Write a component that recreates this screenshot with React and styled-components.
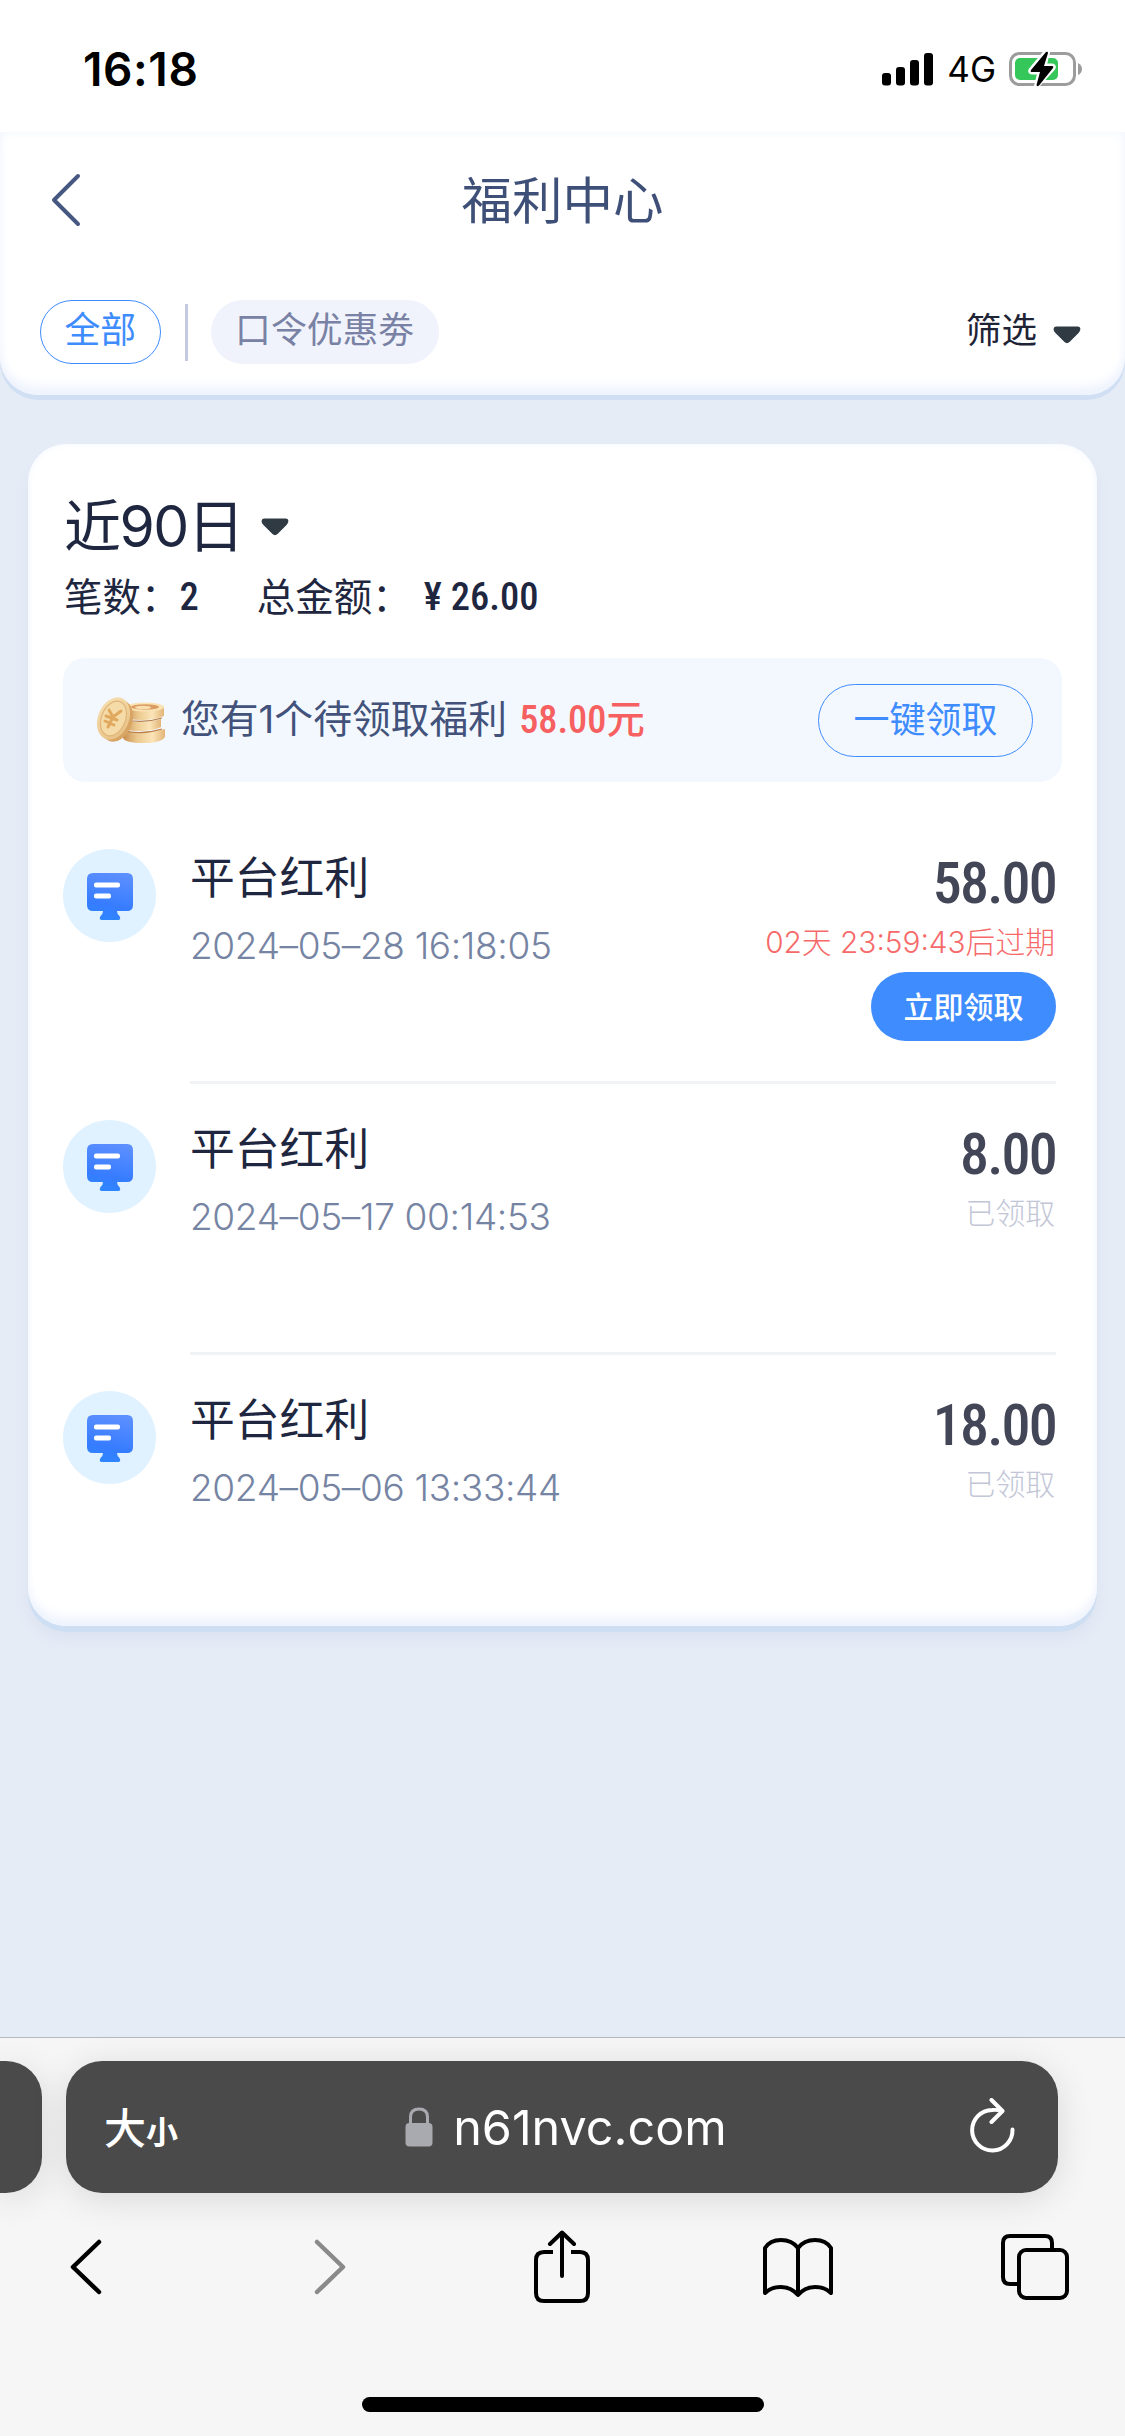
import React, { useState } from "react";
import styled, { createGlobalStyle } from "styled-components";

const GlobalStyle = createGlobalStyle`
  * {
    box-sizing: border-box;
  }

  body {
    margin: 0;
    background-color: #e5ecf6;
    font-family: Inter, "Noto Sans CJK SC", sans-serif;
  }

  button {
    font-family: inherit;
    cursor: pointer;
  }
`;

const Phone = styled.div`
  display: flex;
  flex-direction: column;
  width: 1125px;
  height: 2436px;
  overflow: hidden;
  background-color: #e5ecf6;
`;

const StatusBar = styled.div`
  display: flex;
  justify-content: space-between;
  align-items: center;
  height: 132px;
  padding: 6px 42px 0 83px;
  background-color: white;
  color: black;
`;

const Clock = styled.div`
  font-size: 46px;
  font-weight: 600;
  letter-spacing: 0.6px;
`;

const StatusIcons = styled.div`
  display: flex;
  align-items: center;
  gap: 13px;
  font-size: 35px;
`;

const Header = styled.header`
  height: 263px;
  background-color: white;
  border-radius: 0 0 38px 38px;
  box-shadow: 0 5px 0 #d0dff3, inset 0 -12px 12px -4px #edf2fd,
    inset 0 0 12px #f3f6fd;
`;

const TitleBar = styled.div`
  display: grid;
  grid-template-columns: 60px 1fr 60px;
  align-items: center;
  height: 136px;
  padding: 0 36px;
`;

const BackButton = styled.button`
  display: flex;
  padding: 0 0 0 14px;
  border: none;
  background-color: transparent;
`;

const Title = styled.h1`
  margin: 0;
  padding-bottom: 6px;
  color: #3f5078;
  font-size: 50.5px;
  font-weight: 400;
  text-align: center;
`;

const FilterBar = styled.div`
  display: flex;
  align-items: center;
  padding: 32px 44px 0 40px;
`;

const Pill = styled.button`
  height: 64px;
  padding: 0 23.5px 3px;
  border: 1.5px solid ${({ $active }) => ($active ? "#3f8cff" : "#f0f3fb")};
  border-radius: 32px;
  background-color: ${({ $active }) => ($active ? "white" : "#f0f3fb")};
  color: ${({ $active }) => ($active ? "#3f8cff" : "#7981a4")};
  font-size: 35.8px;
  line-height: 55px;
`;

const PillDivider = styled.div`
  width: 3px;
  height: 57px;
  margin: 0 23px 0 24px;
  background-color: #c5cade;
`;

const FilterLink = styled.div`
  display: flex;
  align-items: center;
  gap: 16px;
  margin-left: auto;
  padding-bottom: 2px;
  color: #1e2435;
  font-size: 35.6px;
  line-height: 54px;

  svg {
    margin-top: 7px;
  }
`;

const Card = styled.main`
  width: 1069px;
  height: 1182px;
  margin: 49px 28px 0;
  padding: 42px 36px 0;
  background-color: white;
  border-radius: 38px;
  box-shadow: 0 6px 0 #cfdff3, 0 12px 14px #dbe2f0,
    inset 0 -12px 12px -4px #edf2fd, inset 0 0 10px #f5f8fe;
`;

const Period = styled.div`
  display: flex;
  align-items: center;
  gap: 18px;
  height: 72px;
  color: #1e273f;
  font-size: 57px;
  font-weight: 400;
  letter-spacing: -1.6px;

  svg {
    margin-top: 9px;
  }
`;

const Summary = styled.div`
  display: flex;
  align-items: center;
  height: 60px;
  margin-top: 6px;
  color: #1e273f;
  font-size: 38.5px;
`;

const SummaryLabel = styled.span`
  margin: 0 13px 0 58px;
`;

const Num = styled.span`
  font-family: Roboto, "Noto Sans CJK SC", sans-serif;
  font-weight: 550;
  font-stretch: 79%;
`;

const SummaryValue = styled(Num)`
  padding-top: 4px;
`;

const Notice = styled.section`
  display: flex;
  align-items: center;
  width: 999px;
  height: 124px;
  margin: 34px 0 0 -1px;
  padding: 0 29px 0 32px;
  border-radius: 22px;
  background-color: #f3f8ff;
`;

const NoticeText = styled.div`
  margin-left: 14px;
  padding-bottom: 1px;
  color: #42527a;
  font-size: 38.8px;
  line-height: 56px;

  ${Num} {
    margin-left: 12px;
    color: #f66060;
    font-size: 38.3px;
  }
`;

const ClaimAllButton = styled.button`
  width: 215px;
  height: 73px;
  margin-left: auto;
  padding: 0 0 6px;
  border: 1.5px solid #3f8cff;
  border-radius: 37px;
  background-color: transparent;
  color: #3f8cff;
  font-size: 36px;
`;

const RecordList = styled.div`
  padding-top: 31px;
`;

const Record = styled.article`
  display: flex;
  height: 271px;
`;

const RecordIcon = styled.div`
  display: flex;
  align-items: center;
  justify-content: center;
  width: 93px;
  height: 93px;
  margin: 36px 0 0 -1px;
  border-radius: 50%;
  background-color: #e0f2ff;
`;

const RecordBody = styled.div`
  display: flex;
  justify-content: space-between;
  width: 866px;
  margin-left: 34px;
  padding-top: 32px;
  border-bottom: ${({ $last }) => ($last ? "none" : "3px solid #f1f2f5")};
`;

const RecordName = styled.div`
  height: 66px;
  color: #1e273f;
  font-size: 44.8px;
  line-height: 66px;
`;

const RecordDate = styled.div`
  color: #7684a3;
  font-size: 37px;
  font-weight: 300;
  letter-spacing: -0.35px;
  line-height: 70px;
`;

const RecordRight = styled.div`
  display: flex;
  flex-direction: column;
  align-items: flex-end;
`;

const Amount = styled(Num)`
  height: 64px;
  color: #424657;
  font-size: 58px;
  font-stretch: 75%;
  letter-spacing: -1.8px;
  line-height: 76px;
`;

const RecordStatus = styled.div`
  height: 63px;
  padding-right: 1px;
  color: ${({ $pending }) => ($pending ? "#f66a6a" : "#c2c6d6")};
  font-size: 29.8px;
  font-weight: 300;
  line-height: 66px;
`;

const ClaimButton = styled.button`
  width: 185px;
  height: 69px;
  padding: 0 0 3px;
  border: none;
  border-radius: 35px;
  background-color: #3f8cff;
  color: white;
  font-size: 30px;
  font-weight: 500;
`;

const BrowserBar = styled.footer`
  display: flex;
  flex-direction: column;
  align-items: center;
  height: 399px;
  margin-top: auto;
  border-top: 1px solid #b4bac4;
  background-color: #f6f6f6;
`;

const TabStrip = styled.div`
  display: flex;
  gap: 24px;
  width: 1125px;
  padding-top: 23px;
`;

const TabTile = styled.div`
  display: grid;
  grid-template-columns: 90px 1fr 90px;
  align-items: center;
  width: 992px;
  height: 132px;
  padding: 0 38px;
  border-radius: 36px;
  background-color: #4a4a4a;
  box-shadow: 0 6px 36px rgba(0, 0, 0, 0.12);
  color: white;
`;

const PreviousTab = styled.div`
  width: 42px;
  height: 132px;
  border-radius: 0 36px 36px 0;
  background-color: #4a4a4a;
  box-shadow: 0 6px 36px rgba(0, 0, 0, 0.12);
`;

const TextSize = styled.div`
  display: flex;
  align-items: baseline;
  padding-bottom: 3px;
  font-size: 42px;
  font-weight: 500;
  white-space: nowrap;

  small {
    font-size: 32px;
    font-weight: 600;
  }
`;

const Address = styled.div`
  display: flex;
  align-items: center;
  justify-content: center;
  gap: 20px;
  padding-left: 8px;
  font-size: 48.5px;
`;

const ReloadButton = styled.div`
  display: flex;
  justify-content: flex-end;
  padding: 0 3px 2px 0;
`;

const Toolbar = styled.nav`
  display: flex;
  justify-content: space-between;
  width: 1019px;
  height: 76px;
  margin: 36px 0 0 -4px;
`;

const ToolButton = styled.div`
  display: flex;
  align-items: center;
  justify-content: center;
  width: 70px;
  padding-left: ${({ $shift }) => $shift || 0}px;

  svg {
    flex-shrink: 0;
  }
`;

const HomeIndicator = styled.div`
  width: 402px;
  height: 15px;
  margin-top: 92px;
  border-radius: 8px;
  background-color: black;
`;

const records = [
  {
    id: 1,
    name: "平台红利",
    date: "2024–05–28 16:18:05",
    amount: "58.00",
    expires: "02天 23:59:43后过期",
  },
  { id: 2, name: "平台红利", date: "2024–05–17 00:14:53", amount: "8.00" },
  { id: 3, name: "平台红利", date: "2024–05–06 13:33:44", amount: "18.00" },
];

const Caret = () => (
  <svg width="28" height="18" viewBox="0 0 28 18">
    <path
      d="M3 0.5H25Q28 1 27.2 4Q26.8 5.5 25.5 7L16.5 16Q14 18.3 11.5 16L2.5 7Q1 5.5 0.7 4Q0 1 3 0.5Z"
      fill="#303a42"
    />
  </svg>
);

const SignalIcon = () => (
  <svg width="52" height="33" viewBox="0 0 52 33">
    <rect x="0" y="20" width="9" height="12.5" rx="3" />
    <rect x="14" y="14" width="9" height="18.5" rx="3" />
    <rect x="28" y="7" width="9" height="25.5" rx="3" />
    <rect x="42" y="0" width="9" height="32.5" rx="3" />
  </svg>
);

const BatteryIcon = () => (
  <svg width="74" height="36" viewBox="0 0 74 36">
    <rect x="1.5" y="2.5" width="64" height="31" rx="9" fill="none" stroke="#9c9c9c" strokeWidth="3" />
    <path d="M69 12Q73 14 73 18T69 24Z" fill="#9c9c9c" />
    <rect x="6" y="7" width="43" height="22" rx="5" fill="#35c759" />
    <path
      d="M37 1L22 19Q21 21 23 21H31L27.5 35L44 17Q45 15 43 15H35L38.5 1.5Z"
      stroke="white"
      strokeWidth="5"
      strokeLinejoin="round"
    />
    <path d="M37 1L22 19Q21 21 23 21H31L27.5 34Q28 36 30 34.5L44 17Q45 15 43 15H35L39 2Q39 0 37 1Z" />
  </svg>
);

const CoinsIcon = () => (
  <svg width="72" height="48" viewBox="0 0 72 48">
    <defs>
      <linearGradient id="coinEdge" x1="0" x2="1">
        <stop offset="0" stopColor="#c98e4e" />
        <stop offset="0.35" stopColor="#ecca90" />
        <stop offset="0.7" stopColor="#fbe4b8" />
        <stop offset="1" stopColor="#e3b678" />
      </linearGradient>
      <linearGradient id="coinFace" x1="0" y1="0" x2="1" y2="1">
        <stop offset="0" stopColor="#f8e2b4" />
        <stop offset="1" stopColor="#e6bd80" />
      </linearGradient>
    </defs>
    <path d="M28 34Q48 39 70 33V41Q66 47 48 47T28 42Z" fill="url(#coinEdge)" />
    <path d="M28 24Q48 29 66 23V31Q58 35 46 35T28 33Z" fill="url(#coinEdge)" />
    <path d="M30 10Q48 16 69 10V20Q60 24 47 24T30 21Z" fill="url(#coinEdge)" />
    <ellipse cx="50" cy="11" rx="19" ry="4.5" fill="#fae3b5" />
    <ellipse cx="50" cy="11" rx="14" ry="2.8" fill="#dc9d62" />
    <ellipse cx="48" cy="11.5" rx="8" ry="1.8" fill="#f8dfad" />
    <path d="M30 23.5Q48 28 67 22M30 35Q48 39 67 33" stroke="#b97d45" strokeWidth="1.2" fill="none" />
    <ellipse cx="22" cy="25" rx="15" ry="21.5" transform="rotate(22 22 25)" fill="#d9a564" />
    <ellipse cx="18.5" cy="22.5" rx="15.5" ry="22" transform="rotate(22 18.5 22.5)" fill="url(#coinFace)" />
    <ellipse cx="18.5" cy="22.5" rx="12" ry="18" transform="rotate(22 18.5 22.5)" fill="#f5dba8" stroke="#e0b67a" strokeWidth="1.2" />
    <path
      d="M14 14L18 21L26 15M18 21L13 31M11 20L22 24M10 25L19 29"
      stroke="#e0a95f"
      strokeWidth="3"
      strokeLinecap="round"
      fill="none"
    />
  </svg>
);

const BoardIcon = () => (
  <svg width="48" height="48" viewBox="0 0 48 48">
    <defs>
      <linearGradient id="board" x1="0.6" y1="0" x2="0.4" y2="1">
        <stop offset="0" stopColor="#5c8fff" />
        <stop offset="0.7" stopColor="#367cff" />
        <stop offset="1" stopColor="#2e86ff" />
      </linearGradient>
    </defs>
    <path
      d="M7 1H41Q47 1 47 7V33Q47 39 41 39H31Q31 42 33.5 44Q35.5 48 32 48H16Q12.5 48 14.5 44Q17 42 17 39H7Q1 39 1 33V7Q1 1 7 1Z"
      fill="url(#board)"
    />
    <rect x="8" y="10.5" width="26" height="5" rx="2" fill="white" />
    <rect x="8" y="21.5" width="17" height="5" rx="2" fill="white" />
  </svg>
);

const LockIcon = () => (
  <svg width="28" height="40" viewBox="0 0 28 40">
    <path d="M5.5 18V10Q5.5 2 14 2T22.5 10V18" fill="none" stroke="#a9a9b0" strokeWidth="3" />
    <rect x="0.5" y="16" width="27" height="23.5" rx="4" fill="#a9a9b0" />
  </svg>
);

const ReloadIcon = () => (
  <svg width="48" height="56" viewBox="0 0 48 56" fill="none" stroke="white" strokeWidth="4" strokeLinecap="round" strokeLinejoin="round">
    <path d="M43.5 31.5A20.2 20.2 0 1 1 23 12Q29 11.5 33 13" />
    <path d="M22.5 2L33.5 13L22.5 24" />
  </svg>
);

const Chevron = ({ color, flipped }) => (
  <svg width="34" height="60" viewBox="0 0 34 60" fill="none" stroke={color} strokeWidth="4.5" strokeLinecap="round" strokeLinejoin="round">
    <path d={flipped ? "M4 5L30 30L4 55" : "M30 5L4 30L30 55"} />
  </svg>
);

const ShareIcon = () => (
  <svg width="60" height="74" viewBox="0 0 60 74" fill="none" stroke="black" strokeWidth="4" strokeLinecap="round" strokeLinejoin="round">
    <path d="M21 22H12Q4 22 4 30V63Q4 71 12 71H48Q56 71 56 63V30Q56 22 48 22H39" strokeLinecap="butt" />
    <path d="M30 46V3M18 14L30 2.5L42 14" />
  </svg>
);

const BookIcon = () => (
  <svg width="74" height="62" viewBox="0 0 74 62" fill="none" stroke="black" strokeWidth="4" strokeLinejoin="round" strokeLinecap="round">
    <path d="M37 12Q31 4 20 4Q9 4 4 12V57Q10 51 20 51Q30 51 37 59Q44 51 54 51Q64 51 70 57V12Q65 4 54 4Q43 4 37 12V58" />
  </svg>
);

const TabsIcon = () => (
  <svg width="70" height="68" viewBox="0 0 70 68" fill="none" stroke="black" strokeWidth="4" strokeLinejoin="round">
    <path d="M17 51H10Q3 51 3 44V10Q3 3 10 3H45Q52 3 52 10V17" />
    <rect x="19" y="17" width="48" height="48" rx="7" />
  </svg>
);

function App() {
  const [tab, setTab] = useState("all");

  return (
    <Phone>
      <GlobalStyle />
      <StatusBar>
        <Clock>16:18</Clock>
        <StatusIcons>
          <SignalIcon />
          <span>4G</span>
          <BatteryIcon />
        </StatusIcons>
      </StatusBar>

      <Header>
        <TitleBar>
          <BackButton>
            <svg width="32" height="54" viewBox="0 0 32 54" fill="none" stroke="#465781" strokeWidth="4" strokeLinecap="round" strokeLinejoin="round">
              <path d="M28 3L4 27L28 51" />
            </svg>
          </BackButton>
          <Title>福利中心</Title>
        </TitleBar>
        <FilterBar>
          <Pill $active={tab === "all"} onClick={() => setTab("all")}>
            全部
          </Pill>
          <PillDivider />
          <Pill $active={tab === "code"} onClick={() => setTab("code")}>
            口令优惠劵
          </Pill>
          <FilterLink>
            筛选
            <Caret />
          </FilterLink>
        </FilterBar>
      </Header>

      <Card>
        <Period>
          近90日
          <Caret />
        </Period>
        <Summary>
          笔数：<SummaryValue>2</SummaryValue>
          <SummaryLabel>总金额：</SummaryLabel>
          <SummaryValue>¥ 26.00</SummaryValue>
        </Summary>
        <Notice>
          <CoinsIcon />
          <NoticeText>
            您有1个待领取福利
            <Num>58.00元</Num>
          </NoticeText>
          <ClaimAllButton>一键领取</ClaimAllButton>
        </Notice>
        <RecordList>
          {records.map((record, index) => (
            <Record key={record.id}>
              <RecordIcon>
                <BoardIcon />
              </RecordIcon>
              <RecordBody $last={index === records.length - 1}>
                <div>
                  <RecordName>{record.name}</RecordName>
                  <RecordDate>{record.date}</RecordDate>
                </div>
                <RecordRight>
                  <Amount>{record.amount}</Amount>
                  <RecordStatus $pending={!!record.expires}>
                    {record.expires || "已领取"}
                  </RecordStatus>
                  {record.expires && <ClaimButton>立即领取</ClaimButton>}
                </RecordRight>
              </RecordBody>
            </Record>
          ))}
        </RecordList>
      </Card>

      <BrowserBar>
        <TabStrip>
          <PreviousTab />
          <TabTile>
            <TextSize>
              大<small>小</small>
            </TextSize>
            <Address>
              <LockIcon />
              n61nvc.com
            </Address>
            <ReloadButton>
              <ReloadIcon />
            </ReloadButton>
          </TabTile>
        </TabStrip>
        <Toolbar>
          <ToolButton>
            <Chevron color="black" />
          </ToolButton>
          <ToolButton $shift={14}>
            <Chevron color="#8a8a8a" flipped />
          </ToolButton>
          <ToolButton $shift={3}>
            <ShareIcon />
          </ToolButton>
          <ToolButton>
            <BookIcon />
          </ToolButton>
          <ToolButton>
            <TabsIcon />
          </ToolButton>
        </Toolbar>
        <HomeIndicator />
      </BrowserBar>
    </Phone>
  );
}

export default App;
